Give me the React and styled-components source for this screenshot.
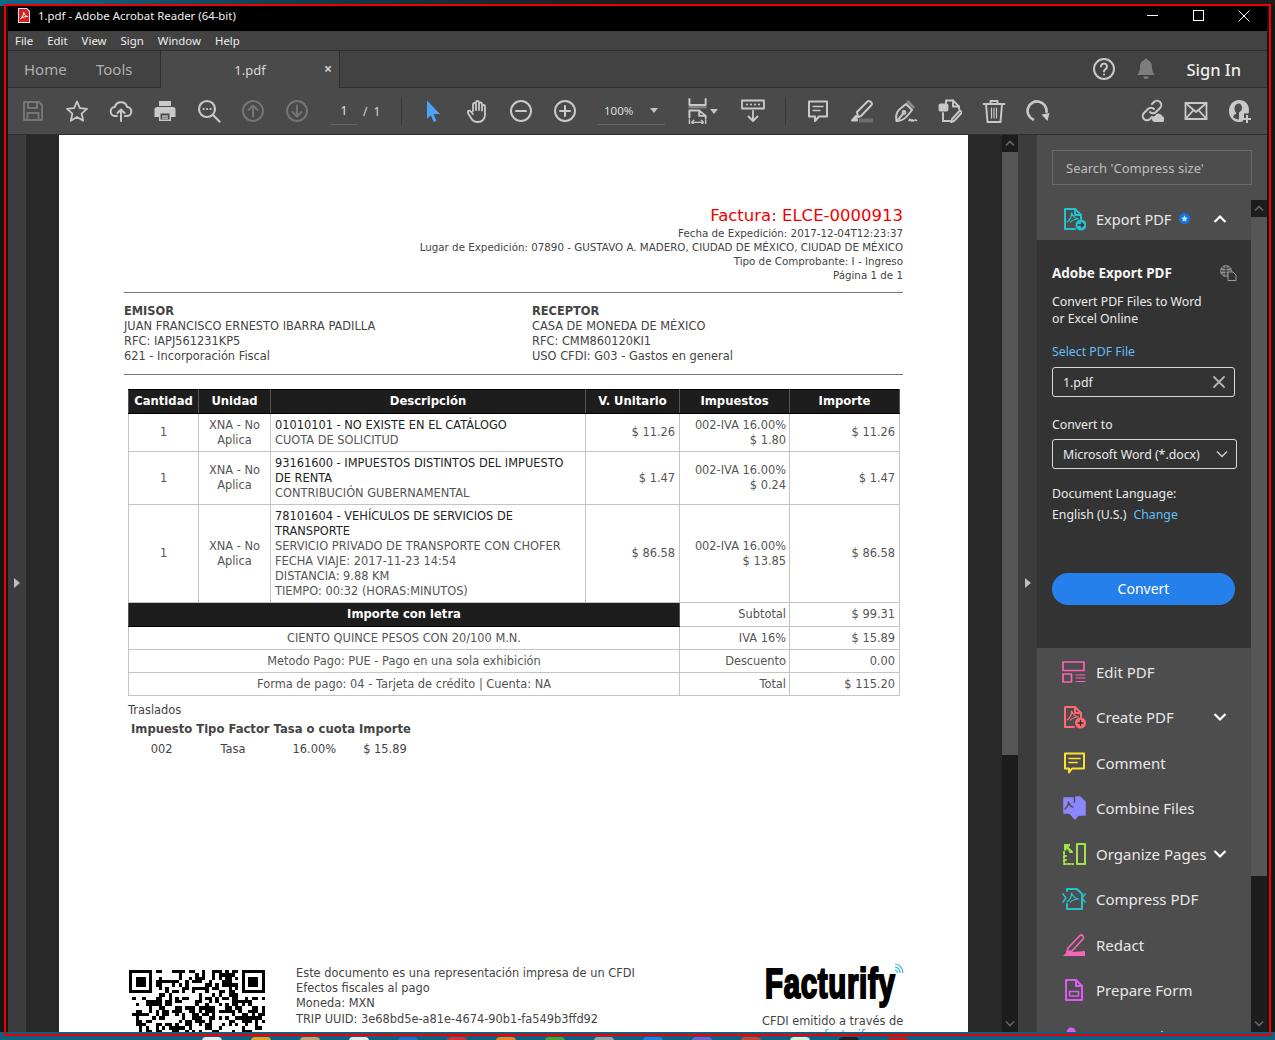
import React from 'react';
import styled, { createGlobalStyle } from 'styled-components';

const GlobalStyle = createGlobalStyle`
  html, body { margin: 0; padding: 0; background: #161616; }
  * { box-sizing: border-box; }
`;

const UI = `'Noto Sans', 'Open Sans', sans-serif`;
const DOC = `'DejaVu Sans', sans-serif`;

const Screen = styled.div`
  position: relative;
  width: 1275px;
  height: 1040px;
  overflow: hidden;
  padding: 6px 8px 0;
  display: flex;
  flex-direction: column;
  background: linear-gradient(90deg, #0f6a8c 0, #123c4c 300px, #1c1c1c 640px) top / 100% 6px no-repeat, #161616;
  font-family: ${UI};
`;
const RedFrame = styled.div`
  position: absolute;
  left: 4px;
  top: 4px;
  width: 1267px;
  height: 1032px;
  border: 2px solid #f00000;
  pointer-events: none;
`;
const Win = styled.div`
  width: 1259px;
  height: 1026px;
  flex: none;
  display: flex;
  flex-direction: column;
  background: #424242;
  overflow: hidden;
`;
const Taskbar = styled.div`
  flex: 1;
  margin: 0 -8px;
  padding: 5px 0 0 202px;
  display: flex;
  gap: 29px;
  background: #0f5f80;
  overflow: hidden;
`;
const TaskIcon = styled.span`
  flex: none;
  width: 20px;
  height: 8px;
  border-radius: 4px 4px 0 0;
  background: ${p => p.$c};
`;
const TitleBar = styled.div`
  height: 25px;
  flex: none;
  background: #000;
  color: #f0f0f0;
  display: flex;
  align-items: center;
  padding: 0 0 6px 9px;
  font-size: 11.4px;
`;
const TitleText = styled.span`
  margin-left: 7px;
`;
const WinButtons = styled.div`
  margin-left: auto;
  display: flex;
`;
const WinBtn = styled.span`
  width: 46px;
  height: 19px;
  display: flex;
  align-items: center;
  justify-content: center;
`;
const MenuBar = styled.div`
  height: 20px;
  flex: none;
  background: #424242;
  border-bottom: 1px solid #2e2e2e;
  display: flex;
  align-items: center;
  gap: 14px;
  padding: 0 0 0 7px;
  color: #ededed;
  font-size: 11.4px;
`;
const TabBar = styled.div`
  height: 37px;
  flex: none;
  display: flex;
  align-items: stretch;
  background: #424242;
  border-bottom: 1px solid #2e2e2e;
`;
const NavTab = styled.span`
  width: ${p => p.$w}px;
  padding-left: 16px;
  display: flex;
  align-items: center;
  color: #b0b0b0;
  font-size: 15px;
`;
const DocTab = styled.div`
  position: relative;
  width: 180px;
  margin-bottom: -1px;
  background: #4a4a4a;
  border-left: 1px solid #2e2e2e;
  border-right: 1px solid #2e2e2e;
  display: flex;
  align-items: center;
  justify-content: center;
  color: #d8d8d8;
  font-size: 13px;
`;
const TabClose = styled.span`
  position: absolute;
  right: 7px;
  top: 10px;
  color: #d0d0d0;
  font-size: 14px;
  font-weight: 700;
  line-height: 16px;
`;
const TabRight = styled.div`
  margin-left: auto;
  display: flex;
  align-items: center;
  padding-right: 26px;
`;
const SignIn = styled.span`
  margin-left: 10px;
  color: #ececec;
  font-size: 16.5px;
  font-weight: 500;
`;
const ToolBar = styled.div`
  height: 47px;
  flex: none;
  background: #4a4a4a;
  border-bottom: 1px solid #2e2e2e;
  display: flex;
  align-items: center;
  padding-left: 3px;
`;
const IconBtn = styled.span`
  width: ${p => p.$w || 44}px;
  margin-left: ${p => p.$ml || 0}px;
  flex: none;
  display: flex;
  align-items: center;
  justify-content: center;
`;
const PageField = styled.span`
  width: 28px;
  margin-left: 11px;
  height: 27px;
  border-bottom: 1px solid #656565;
  display: flex;
  align-items: center;
  justify-content: center;
  color: #e4e4e4;
  font-size: 12px;
`;
const PageTotal = styled.span`
  margin-left: 5px;
  width: 38px;
  color: #d8d8d8;
  font-size: 12px;
  word-spacing: 3px;
`;
const Sep = styled.span`
  width: 1px;
  height: 28px;
  flex: none;
  background: #383838;
  margin: 0 ${p => p.$r}px 0 ${p => p.$l}px;
`;
const ZoomField = styled.span`
  width: 67px;
  margin-left: 11px;
  height: 27px;
  border-bottom: 1px solid #656565;
  display: flex;
  align-items: center;
  justify-content: space-between;
  padding: 0 7px 0 6px;
  color: #dcdcdc;
  font-size: 11.5px;
`;
const Caret = styled.span`
  flex: none;
  width: 0;
  height: 0;
  border-left: 4px solid transparent;
  border-right: 4px solid transparent;
  border-top: 5px solid #c4c4c4;
`;
const ToolSpacer = styled.span`
  flex: 1;
`;
const Body = styled.div`
  flex: 1;
  min-height: 0;
  display: flex;
`;
const Rail = styled.div`
  width: ${p => p.$w}px;
  flex: none;
  display: flex;
  align-items: center;
  justify-content: center;
  background: #3c3c3c;
  padding-bottom: 1px;
`;
const RailArrow = styled.span`
  width: 0;
  height: 0;
  border-top: 5px solid transparent;
  border-bottom: 5px solid transparent;
  border-left: 6px solid #bdbdbd;
`;
const Gutter = styled.div`
  width: ${p => p.$w}px;
  flex: none;
  background: #282828;
`;
const Scroll = styled.div`
  width: 16px;
  flex: none;
  display: flex;
  flex-direction: column;
  background: #1c1c1c;
`;
const ScrollEnd = styled.div`
  height: 17px;
  flex: none;
  display: flex;
  align-items: center;
  justify-content: center;
  background: #1c1c1c;
`;
const ScrollThumb = styled.div`
  height: ${p => p.$h}px;
  flex: none;
  background: #565656;
`;
const ScrollRest = styled.div`
  flex: 1;
`;

const Page = styled.div`
  width: 909px;
  flex: none;
  background: #fff;
  overflow: hidden;
  padding: 71px 65px 0;
  font-family: ${DOC};
  font-size: 11.4px;
  line-height: 14px;
  color: #444;
`;
const Heading = styled.div`
  text-align: right;
  font-size: 10.3px;
`;
const InvoiceNo = styled.div`
  color: #f00000;
  font-size: 16.5px;
  line-height: 20px;
`;
const Rule = styled.div`
  height: 1px;
  background: #777;
  margin-top: ${p => p.$t}px;
`;
const Parties = styled.div`
  display: flex;
  padding-top: 11px;
  line-height: 15px;
`;
const Party = styled.div`
  width: 408px;
  flex: none;
`;
const PartyName = styled.div`
  font-weight: 700;
  color: #444;
`;
const InvoiceTable = styled.table`
  width: 771px;
  margin: 14px 0 0 4px;
  border-collapse: collapse;
  table-layout: fixed;
  color: #555;
  line-height: 15px;
`;
const Col = styled.col`
  width: ${p => p.$w}px;
`;
const Th = styled.th`
  height: 24px;
  padding: 0;
  background: #1d1d1d;
  color: #fff;
  border: 1px solid #000;
  border-left-color: #555;
  border-right-color: #555;
  font-weight: 700;
  font-size: 11.6px;
`;
const Td = styled.td`
  padding: ${p => p.$pad || '0 4px'};
  height: ${p => p.$h}px;
  border: 1px solid #c4c4c4;
  text-align: ${p => p.$align || 'left'};
  vertical-align: middle;
`;
const Code = styled.div`
  color: #222;
`;
const Trasl = styled.div`
  margin: 7px 0 0 4px;
`;
const TaxTable = styled.table`
  margin: 2px 0 0 5px;
  border-collapse: separate;
  border-spacing: 0;
`;
const TaxHead = styled.th`
  padding: 0 2px;
  height: 20px;
  font-weight: 700;
  font-size: 11.6px;
  white-space: nowrap;
`;
const TaxCell = styled.td`
  padding: 0;
  height: 20px;
  text-align: center;
`;
const Foot = styled.div`
  display: flex;
  margin: 211px 0 0 5px;
`;
const QrBox = styled.div`
  width: 136px;
  height: 136px;
  flex: none;
`;
const FootText = styled.div`
  margin: -4px 0 0 31px;
  line-height: 15.2px;
`;
const Brand = styled.div`
  margin-left: auto;
  width: 142px;
  margin-right: -1px;
  margin-top: -7px;
`;
const BrandBox = styled.div`
  position: relative;
`;
const BrandName = styled.div`
  height: 42px;
  color: #000;
  font-family: 'Liberation Sans', sans-serif;
  font-weight: 700;
  font-size: 42px;
  line-height: 42px;
  letter-spacing: 1px;
  -webkit-text-stroke: 2.2px #000;
  transform: scaleX(0.7);
  transform-origin: left center;
  margin-left: 3px;
  white-space: nowrap;
`;
const BrandWifi = styled.svg`
  position: absolute;
  right: 0;
  top: 0;
`;
const BrandNote = styled.div`
  margin-top: 9px;
  white-space: nowrap;
`;
const BrandLink = styled.div`
  padding-left: 62px;
  color: #3aa0d8;
`;

const Side = styled.div`
  width: 230px;
  flex: none;
  display: flex;
  flex-direction: column;
  background: #4d4d4d;
`;
const SearchWrap = styled.div`
  height: 65px;
  flex: none;
  padding: 15px 15px 0;
`;
const SearchBox = styled.div`
  height: 35px;
  border: 1px solid #6a6a6a;
  padding-left: 13px;
  display: flex;
  align-items: center;
  color: #bdbdbd;
  font-size: 13px;
`;
const SideMain = styled.div`
  flex: 1;
  min-height: 0;
  display: flex;
`;
const Panel = styled.div`
  width: 214px;
  flex: none;
  overflow: hidden;
`;
const ToolList = styled.div`
  padding-top: 1px;
`;
const ToolRow = styled.div`
  height: ${p => p.$h || 45.5}px;
  display: flex;
  align-items: center;
  padding: ${p => p.$h ? '0 24px 3px 25px' : '0 24px 0 25px'};
  color: #e8e8e8;
  font-size: ${p => p.$h ? 14.5 : 15}px;
`;
const ToolName = styled.span`
  margin-left: 10px;
  white-space: nowrap;
`;
const Star = styled.span`
  margin-left: 8px;
  display: flex;
`;
const Chevron = styled.span`
  margin-left: auto;
  display: flex;
`;
const Section = styled.div`
  height: 408px;
  background: #333;
  padding: 25px 15px 0;
  color: #ececec;
  font-size: 12.3px;
  line-height: 17px;
`;
const SectionHead = styled.div`
  display: flex;
  justify-content: space-between;
  font-weight: 700;
  font-size: 13.5px;
  color: #f4f4f4;
  margin-right: -1px;
`;
const Intro = styled.div`
  margin-top: 11px;
`;
const Blue = styled.div`
  margin-top: 16px;
  color: #63bdf6;
`;
const Field = styled.div`
  width: ${p => p.$w}px;
  height: 30px;
  margin-top: ${p => p.$t}px;
  border: 1px solid #d8d8d8;
  border-radius: 3px;
  display: flex;
  align-items: center;
  justify-content: space-between;
  padding: 0 8px 0 10px;
`;
const Label = styled.div`
  margin-top: ${p => p.$t}px;
`;
const Change = styled.span`
  margin-left: 7px;
  color: #63bdf6;
`;
const ConvertBtn = styled.div`
  width: 183px;
  height: 32px;
  margin-top: 50px;
  padding-bottom: 2px;
  border-radius: 16px;
  background: #2680eb;
  color: #fff;
  font-size: 14px;
  display: flex;
  align-items: center;
  justify-content: center;
`;

const Svg = ({ c = '#c9c9c9', s = 24, w = 2, vb = 24, children }) => (
  <svg width={s} height={s} viewBox={`0 0 ${vb} ${vb}`} fill="none" stroke={c} strokeWidth={w} strokeLinejoin="round" strokeLinecap="round">
    {children}
  </svg>
);

const PdfMark = ({ c }) => <path d="M5 15c3-2 5-6 4.500-9 2 4 4 6 7 6-3 0-6 1-8 3" stroke={c} strokeWidth="1.200" fill="none" />;

const icons = {
  save: c => <Svg c={c}><path d="M3 3h15l3 3v15H3z" /><path d="M7 3v6h9V3M6.500 21v-7h11v7" /></Svg>,
  star: c => <Svg c={c} w={1.8}><path d="M12 2.500l2.900 6.700 7.100.7-5.400 4.700 1.600 7.100-6.200-3.700-6.200 3.700 1.600-7.100L2 9.900l7.100-.7z" /></Svg>,
  upload: c => <Svg c={c}><path d="M8 17H6.500a4.500 4.500 0 0 1-.6-9 6.300 6.300 0 0 1 12.200 0 4.500 4.500 0 0 1-.6 9H16" /><path d="M12 22v-11M8.500 14l3.500-3.500 3.500 3.500" /></Svg>,
  print: c => <Svg c={c} w={0}><path fill={c} d="M6 2h12v5H6zM4 8h16a2.500 2.500 0 0 1 2.500 2.500V18H18v4H6v-4H1.500v-7.500A2.500 2.500 0 0 1 4 8z" /><path fill="#4a4a4a" d="M7.500 14.500h9v6h-9z" /><path fill={c} d="M9 16.500h6v1.200H9zM9 18.500h6v1.200H9z" /></Svg>,
  find: c => <Svg c={c} w={2.2}><circle cx="10" cy="10" r="8" /><path d="M16 16l6.500 6.500" /><path d="M6.500 10h.1M10 10h.1M13.500 10h.1" /></Svg>,
  up: c => <Svg c={c}><circle cx="12" cy="12" r="10" /><path d="M12 17.500V7M7.500 11L12 6.500l4.500 4.500" /></Svg>,
  down: c => <Svg c={c}><circle cx="12" cy="12" r="10" /><path d="M12 6.500V17M7.500 13l4.500 4.500 4.500-4.500" /></Svg>,
  arrow: c => <Svg c={c} w={0}><path fill={c} d="M6 1.500l13 13.500-6.500.2 3 6.800-2.800 1-2.900-6.800L6 20z" /></Svg>,
  hand: c => <Svg c={c} w={1.8}><path d="M8 12V5.500a1.500 1.500 0 0 1 3 0V11m0-7.500a1.500 1.500 0 0 1 3 0V11m0-6a1.500 1.500 0 0 1 3 0v6.500m0-4a1.500 1.500 0 0 1 3 0V16c0 4-3 7-7 7h-1c-3 0-4.500-1.500-6-4l-3-5c-1-2 1.500-3 2.800-1.500L8 15" /></Svg>,
  minus: c => <Svg c={c}><circle cx="12" cy="12" r="10" /><path d="M7 12h10" /></Svg>,
  plus: c => <Svg c={c}><circle cx="12" cy="12" r="10" /><path d="M7 12h10M12 7v10" /></Svg>,
  fit: c => <Svg c={c} s={26} w={1.8}><path d="M5 1v5.500h15V1" /><path d="M5 8.500h15" stroke="#8a8a8a" strokeWidth="2" /><path d="M5 18v-6.500h9l6 5v2M14 11.500v5h6" /><path d="M5 20v5M20 20v5M7 22.500h11M9 20.500l-2 2 2 2M16 20.500l2 2-2 2" strokeWidth="1.300" /></Svg>,
  scroll: c => <Svg c={c} s={24} w={1.8}><rect x="1" y="1.500" width="22" height="8" /><path d="M6 5.500h.1M10 5.500h.1M14 5.500h.1M18 5.500h.1" strokeWidth="2" /><path d="M12 12v10M7.500 17.500L12 22l4.500-4.500" /></Svg>,
  comment: c => <Svg c={c}><path d="M3 2.500h18v15h-8l-4 4.500v-4.500H3z" /><path d="M7 7.500h10M7 11.500h7" strokeWidth="1.300" /></Svg>,
  highlight: c => <Svg c={c} w={2}><path d="M7 13L17.500 2.500c1.500-1.500 5.500 1 4 3.500L11 17l-3 1z" /><path d="M6 17l-4 4.500h5z" fill={c} /><path d="M9 21.500h14" stroke="#6e6e6e" strokeWidth="4" strokeLinecap="butt" /></Svg>,
  sign: c => <Svg c={c} w={2}><path d="M2.500 22c-1-6 .5-10 4-12.500L12 5l6 6-4 5c-3 4-6 6-11.500 6z" /><path d="M13 2l7 7" stroke="#8a8a8a" strokeWidth="3" strokeLinecap="butt" /><path d="M3 22l5.500-6.500" /><circle cx="10" cy="13.500" r="1.400" /><path d="M15 21.500c1-1.500 1.500-1.500 2 0s1-1.500 1.500-.5.500 1.500 1.500.5 1-1 2.500 0" strokeWidth="1.600" /></Svg>,
  fill: c => <Svg c={c} w={1.9}><path d="M8 5V1.500h7l6 6V10" /><path d="M15 1.500v6h6" /><path d="M5 14v8h7" /><rect x="1.500" y="5.500" width="8" height="6" rx="1" fill={c} /><path d="M14 20l8-8.500 2 2-8 8.500-3 1z" /></Svg>,
  trash: c => <Svg c={c} w={1.9}><path d="M1.500 5h21M8.500 5V2h7v3M4 5l1.500 18h13L20 5" /><path d="M9.500 9v10M12 9v10M14.500 9v10" strokeWidth="1.200" /></Svg>,
  redo: c => <Svg c={c} w={2.6}><path d="M7 20.500A9.500 9.500 0 1 1 20.500 13" /><path fill={c} strokeWidth="0" d="M15.500 15.500L23.500 14l-2 8z" /></Svg>,
  link: c => <Svg c={c} w={2}><path d="M10 13a4 4 0 0 0 6 0l4-4a4 4 0 0 0-6-6l-2 2" /><path d="M14 10a4 4 0 0 0-6 0l-4 4a4 4 0 0 0 6 6l2-2" /><path fill={c} strokeWidth="0" d="M15 23a3 3 0 0 1 0-6 4 4 0 0 1 7.500.500 2.800 2.800 0 0 1 0 5.500z" /></Svg>,
  mail: c => <Svg c={c} w={1.8}><rect x="1.500" y="4" width="21" height="16" /><path d="M1.500 4L12 13 22.500 4M1.500 20l8-8.800M22.500 20l-8-8.800" /></Svg>,
  user: c => <Svg c={c} w={0}><path fill={c} fillRule="evenodd" d="M11 1c6 0 10 4 10 10 0 1.500-.2 2.500-.5 3.500H16V19h-1v3.500c-1 .3-2.500.5-4 .5C5 23 1 18 1 12S5 1 11 1zm0 3.500c-3 0-4.500 2.500-4.500 5 0 2 1 4 2 5-2 1-3 2-3.500 3.500 1.500 1.500 3.500 2.500 6 2.500v-7c2-1 3-3 3-4.500 0-2.500-1.500-4.500-3-4.500z" /><path fill={c} d="M18 16h2v3h3v2h-3v3h-2v-3h-3v-2h3z" /></Svg>,
  help: c => <Svg c={c} w={2}><circle cx="12" cy="12" r="10" /><path d="M9 9.500a3 3 0 1 1 4.500 2.600c-1 .6-1.500 1-1.500 2.400M12 17.500h.1" /></Svg>,
  bell: c => <Svg c={c} w={0}><path fill={c} d="M12 1.500c1 0 1.500.7 1.500 1.500 3 .8 4.500 3.500 4.500 6.500 0 4 1 6.500 3 8.500H3c2-2 3-4.500 3-8.500 0-3 1.500-5.700 4.500-6.500 0-.8.500-1.500 1.500-1.500zM9.500 19.500h5a2.500 2.500 0 0 1-5 0z" /></Svg>,
  xClose: c => <Svg c={c} s={14} vb={14} w={1.8}><path d="M2 2l10 10M12 2L2 12" /></Svg>,
};

const toolIcons = {
  export: <Svg c="#26c0cf"><path d="M13 22H3V2h10l6 6v4" /><path d="M13 2v6h6" /><PdfMark c="#26c0cf" /><circle cx="19" cy="18" r="5.500" fill="#26c0cf" strokeWidth="0" /><path d="M16 18h5.500M19.500 16l2 2-2 2" stroke="#333" strokeWidth="1.400" /></Svg>,
  edit: <Svg c="#ff62b4" w={1.7}><rect x="1" y="2" width="21" height="8.500" /><rect x="1" y="14" width="8.500" height="8" /><path d="M14 15h9M14 18h9M14 21.500h9" strokeWidth="1.200" /></Svg>,
  create: <Svg c="#ff6b70"><path d="M12 22H3V2h10l6 6v4" /><path d="M13 2v6h6" /><PdfMark c="#ff6b70" /><circle cx="18.500" cy="18" r="5.500" fill="#ff6b70" strokeWidth="0" /><path d="M16 18h5M18.500 15.500v5" stroke="#333" strokeWidth="1.400" /></Svg>,
  comment: <Svg c="#ffe12e"><path d="M3 2.500h19v15H10l-3 4v-4H3z" /><path d="M7 7.500h11M7 11.500h8" strokeWidth="1.700" /></Svg>,
  combine: <Svg c="#8c86ff" w={1.5}><path fill="#8c86ff" d="M2 2h9v15H2z" /><path d="M3 13c2-2 4-4 3.500-7 1 3 2 5 4.500 5" stroke="#4d4d4d" /><path fill="#8c86ff" d="M14 1h4l5 5v13h-9z" /><path d="M8 17h10l-5 6z" fill="#8c86ff" /><path d="M13 8v10" stroke="#8c86ff" strokeWidth="3" /></Svg>,
  organize: <Svg c="#a1e34b"><rect x="15" y="2" width="8" height="20" /><path d="M2 10v12h9M2 14h3M2 18h3M8 10h3" strokeDasharray="2 2" /><path fill="#a1e34b" strokeWidth="0" d="M2 2h6v2.500H6l5 5H7.500l-3-3v2H2z" /></Svg>,
  compress: <Svg c="#26c0cf"><path d="M5 4V2h10l5 5v15H5V17" /><path d="M1 7l3 4-3 4M23 7l-3 4 3 4" strokeWidth="1.600" /><PdfMark c="#26c0cf" /></Svg>,
  redact: <Svg c="#f567b4" w={1.8}><path d="M6 15L18 2.500c2-1.500 4.500 1 3 3.500L10 18l-5 1z" /><path fill="#f567b4" strokeWidth="0" d="M1 23l4-4h6l12-1v5z" /></Svg>,
  form: <Svg c="#dc5cf0"><path d="M4 2h10l6 6v14H4z" /><path d="M14 2v6h6" /><rect x="7.500" y="13.500" width="9" height="4.500" strokeWidth="1.600" /></Svg>,
  request: <Svg c="#dc5cf0" w={0}><path fill="#dc5cf0" d="M12 1a6 6 0 0 1 6 6v10H6V7a6 6 0 0 1 6-6z" /></Svg>,
};

const tools = [
  { key: 'edit', name: 'Edit PDF' },
  { key: 'create', name: 'Create PDF', more: true },
  { key: 'comment', name: 'Comment' },
  { key: 'combine', name: 'Combine Files' },
  { key: 'organize', name: 'Organize Pages', more: true },
  { key: 'compress', name: 'Compress PDF' },
  { key: 'redact', name: 'Redact' },
  { key: 'form', name: 'Prepare Form' },
  { key: 'request', name: 'Request Signatures' },
];

const ChevronIcon = ({ up }) => (
  <svg width="14" height="10" viewBox="0 0 14 10" fill="none" stroke="#fff" strokeWidth="2.200">
    <path d={up ? 'M1.500 8L7 2.500 12.500 8' : 'M1.500 2L7 7.500 12.500 2'} />
  </svg>
);

const ScrollGlyph = ({ up }) => (
  <svg width="10" height="7" viewBox="0 0 10 7" fill="none" stroke="#666" strokeWidth="1.600">
    <path d={up ? 'M1 5.500l4-4 4 4' : 'M1 1.500l4 4 4-4'} />
  </svg>
);

// pseudo random modules, the real code can't be read from the picture anyway
function qrPath() {
  const n = 41;
  let seed = 9137;
  const next = () => {
    seed = (seed * 1103515245 + 12345) & 0x7fffffff;
    return (seed >> 16) & 1;
  };
  const inFinder = (x, y) => (x < 8 && y < 8) || (x >= n - 8 && y < 8) || (x < 8 && y >= n - 8);
  let d = '';
  for (let y = 0; y < n; y++) {
    for (let x = 0; x < n; x++) {
      const bit = next();
      if (!inFinder(x, y) && bit) d += `M${x} ${y}h1v1h-1z`;
    }
  }
  [[0, 0], [n - 7, 0], [0, n - 7]].forEach(([x, y]) => {
    d += `M${x} ${y}h7v7h-7zM${x + 1} ${y + 1}v5h5v-5zM${x + 2} ${y + 2}h3v3h-3z`;
  });
  return d;
}

const rows = [
  { h: 38, code: '01010101 - NO EXISTE EN EL CATÁLOGO', lines: ['CUOTA DE SOLICITUD'], unit: '$ 11.26', tax: '$ 1.80' },
  { h: 53, code: '93161600 - IMPUESTOS DISTINTOS DEL IMPUESTO DE RENTA', lines: ['CONTRIBUCIÓN GUBERNAMENTAL'], unit: '$ 1.47', tax: '$ 0.24' },
  { h: 98, code: '78101604 - VEHÍCULOS DE SERVICIOS DE TRANSPORTE', lines: ['SERVICIO PRIVADO DE TRANSPORTE CON CHOFER', 'FECHA VIAJE: 2017-11-23 14:54', 'DISTANCIA: 9.88 KM', 'TIEMPO: 00:32 (HORAS:MINUTOS)'], unit: '$ 86.58', tax: '$ 13.85' },
];

const totals = [
  ['Subtotal', '$ 99.31'],
  ['IVA 16%', '$ 15.89'],
  ['Descuento', '0.00'],
  ['Total', '$ 115.20'],
];
const letra = ['CIENTO QUINCE PESOS CON 20/100 M.N.', 'Metodo Pago: PUE - Pago en una sola exhibición', 'Forma de pago: 04 - Tarjeta de crédito | Cuenta: NA'];
const taskColors = ['#e8e8e8', '#e8a020', '#c8a070', '#e8e8e8', '#1e70c8', '#d83030', '#f08020', '#50a030', '#a0a0a0', '#2080e0', '#7060d0', '#d04030', '#d8f0d8', '#202020', '#c01818'];

export default function App() {
  return (
    <Screen>
      <GlobalStyle />
      <Win>
        <TitleBar>
          <svg width="14" height="15" viewBox="0 0 14 15">
            <path d="M1 0h9l3 3v12H1z" fill="#e8e8e8" />
            <path d="M2 1h7.500L12 3.500V14H2z" fill="#d8201c" />
            <path d="M3.500 10.500c2-1.500 3.500-4 3-6.500 1 3 2.500 4.500 4.500 4.500-2.500 0-5 .5-7.500 2z" fill="none" stroke="#fff" strokeWidth="1" />
          </svg>
          <TitleText>1.pdf - Adobe Acrobat Reader (64-bit)</TitleText>
          <WinButtons>
            <WinBtn><svg width="11" height="11"><path d="M0 5.500h11" stroke="#fff" /></svg></WinBtn>
            <WinBtn><svg width="11" height="11"><rect x=".5" y=".5" width="10" height="10" fill="none" stroke="#fff" /></svg></WinBtn>
            <WinBtn><svg width="12" height="12"><path d="M.5.500l11 11M11.500.500l-11 11" stroke="#fff" /></svg></WinBtn>
          </WinButtons>
        </TitleBar>
        <MenuBar>
          <span>File</span><span>Edit</span><span>View</span><span>Sign</span><span>Window</span><span>Help</span>
        </MenuBar>
        <TabBar>
          <NavTab $w={72}>Home</NavTab>
          <NavTab $w={80}>Tools</NavTab>
          <DocTab>1.pdf<TabClose>×</TabClose></DocTab>
          <TabRight>
            {icons.help('#c9c9c9')}
            <IconBtn $w={60}>{icons.bell('#7d7d7d')}</IconBtn>
            <SignIn>Sign In</SignIn>
          </TabRight>
        </TabBar>
        <ToolBar>
          <IconBtn>{icons.save('#757575')}</IconBtn>
          <IconBtn>{icons.star('#c9c9c9')}</IconBtn>
          <IconBtn>{icons.upload('#c9c9c9')}</IconBtn>
          <IconBtn>{icons.print('#c9c9c9')}</IconBtn>
          <IconBtn>{icons.find('#c9c9c9')}</IconBtn>
          <IconBtn>{icons.up('#757575')}</IconBtn>
          <IconBtn>{icons.down('#757575')}</IconBtn>
          <PageField>1</PageField>
          <PageTotal>/ 1</PageTotal>
          <Sep $l={0} $r={9} />
          <IconBtn>{icons.arrow('#4aa3f5')}</IconBtn>
          <IconBtn>{icons.hand('#c9c9c9')}</IconBtn>
          <IconBtn>{icons.minus('#c9c9c9')}</IconBtn>
          <IconBtn>{icons.plus('#c9c9c9')}</IconBtn>
          <ZoomField>100%<Caret /></ZoomField>
          <IconBtn $w={26} $ml={19}>{icons.fit('#c9c9c9')}</IconBtn>
          <Caret />
          <IconBtn $w={34} $ml={18}>{icons.scroll('#c9c9c9')}</IconBtn>
          <Sep $l={15} $r={10} />
          <IconBtn>{icons.comment('#c9c9c9')}</IconBtn>
          <IconBtn>{icons.highlight('#c9c9c9')}</IconBtn>
          <IconBtn>{icons.sign('#c9c9c9')}</IconBtn>
          <IconBtn>{icons.fill('#c9c9c9')}</IconBtn>
          <IconBtn>{icons.trash('#c9c9c9')}</IconBtn>
          <IconBtn>{icons.redo('#c9c9c9')}</IconBtn>
          <ToolSpacer />
          <IconBtn>{icons.link('#c9c9c9')}</IconBtn>
          <IconBtn>{icons.mail('#c9c9c9')}</IconBtn>
          <IconBtn>{icons.user('#c9c9c9')}</IconBtn>
          <IconBtn $w={5} />
        </ToolBar>
        <Body>
          <Rail $w={18}><RailArrow /></Rail>
          <Gutter $w={33} />
          <Page>
            <Heading>
              <InvoiceNo>Factura: ELCE-0000913</InvoiceNo>
              <div>Fecha de Expedición: 2017-12-04T12:23:37</div>
              <div>Lugar de Expedición: 07890 - GUSTAVO A. MADERO, CIUDAD DE MÉXICO, CIUDAD DE MÉXICO</div>
              <div>Tipo de Comprobante: I - Ingreso</div>
              <div>Página 1 de 1</div>
            </Heading>
            <Rule $t={10} />
            <Parties>
              <Party>
                <PartyName>EMISOR</PartyName>
                <div>JUAN FRANCISCO ERNESTO IBARRA PADILLA</div>
                <div>RFC: IAPJ561231KP5</div>
                <div>621 - Incorporación Fiscal</div>
              </Party>
              <Party>
                <PartyName>RECEPTOR</PartyName>
                <div>CASA DE MONEDA DE MÉXICO</div>
                <div>RFC: CMM860120KI1</div>
                <div>USO CFDI: G03 - Gastos en general</div>
              </Party>
            </Parties>
            <Rule $t={10} />
            <InvoiceTable>
              <colgroup>
                <Col $w={70} /><Col $w={72} /><Col $w={315} /><Col $w={94} /><Col $w={110} /><Col $w={110} />
              </colgroup>
              <thead>
                <tr>
                  <Th>Cantidad</Th><Th>Unidad</Th><Th>Descripción</Th><Th>V. Unitario</Th><Th>Impuestos</Th><Th>Importe</Th>
                </tr>
              </thead>
              <tbody>
                {rows.map(r => (
                  <tr key={r.code}>
                    <Td $h={r.h} $align="center">1</Td>
                    <Td $align="center" $pad="0 2px">XNA - No<br />Aplica</Td>
                    <Td>
                      <Code>{r.code}</Code>
                      {r.lines.map(l => <div key={l}>{l}</div>)}
                    </Td>
                    <Td $align="right">{r.unit}</Td>
                    <Td $align="right" $pad="0 3px">002-IVA 16.00%<br />{r.tax}</Td>
                    <Td $align="right">{r.unit}</Td>
                  </tr>
                ))}
                <tr>
                  <Th colSpan={4}>Importe con letra</Th>
                  <Td $align="right" $pad="0 3px">{totals[0][0]}</Td>
                  <Td $align="right">{totals[0][1]}</Td>
                </tr>
                {letra.map((t, i) => (
                  <tr key={t}>
                    <Td $h={23} colSpan={4} $align="center">{t}</Td>
                    <Td $align="right" $pad="0 3px">{totals[i + 1][0]}</Td>
                    <Td $align="right">{totals[i + 1][1]}</Td>
                  </tr>
                ))}
              </tbody>
            </InvoiceTable>
            <Trasl>Traslados</Trasl>
            <TaxTable>
              <thead>
                <tr><TaxHead>Impuesto</TaxHead><TaxHead>Tipo Factor</TaxHead><TaxHead>Tasa o cuota</TaxHead><TaxHead>Importe</TaxHead></tr>
              </thead>
              <tbody>
                <tr><TaxCell>002</TaxCell><TaxCell>Tasa</TaxCell><TaxCell>16.00%</TaxCell><TaxCell>$ 15.89</TaxCell></tr>
              </tbody>
            </TaxTable>
            <Foot>
              <QrBox>
                <svg width="136" height="136" viewBox="0 0 41 41" shapeRendering="crispEdges">
                  <path d={qrPath()} fill="#000" fillRule="evenodd" />
                </svg>
              </QrBox>
              <FootText>
                <div>Este documento es una representación impresa de un CFDI</div>
                <div>Efectos fiscales al pago</div>
                <div>Moneda: MXN</div>
                <div>TRIP UUID: 3e68bd5e-a81e-4674-90b1-fa549b3ffd92</div>
              </FootText>
              <Brand>
                <BrandBox>
                  <BrandName>Facturify</BrandName>
                  <BrandWifi width="10" height="12" viewBox="0 0 10 12" fill="none" stroke="#35b5d8" strokeWidth="1.200">
                    <path d="M1 1c4 0 8 4 8 9M1 4c3 0 5 3 5 6M1 7c1.500 0 2.500 1.500 2.500 3" />
                  </BrandWifi>
                </BrandBox>
                <BrandNote>CFDI emitido a través de</BrandNote>
                <BrandLink>facturify</BrandLink>
              </Brand>
            </Foot>
          </Page>
          <Gutter $w={34} />
          <Scroll>
            <ScrollEnd><ScrollGlyph up /></ScrollEnd>
            <ScrollThumb $h={603} />
            <ScrollRest />
            <ScrollEnd><ScrollGlyph /></ScrollEnd>
          </Scroll>
          <Rail $w={19}><RailArrow /></Rail>
          <Side>
            <SearchWrap><SearchBox>Search 'Compress size'</SearchBox></SearchWrap>
            <SideMain>
              <Panel>
                <ToolRow $h={40}>
                  {toolIcons.export}
                  <ToolName>Export PDF</ToolName>
                  <Star>
                    <svg width="11" height="11" viewBox="0 0 11 11">
                      <circle cx="5.500" cy="5.500" r="5.500" fill="#1473e6" />
                      <path d="M5.500 2.300l1 2.100 2.200.3-1.600 1.500.4 2.200-2-1-2 1 .4-2.200L2.300 4.700l2.200-.3z" fill="#cfe3ff" />
                    </svg>
                  </Star>
                  <Chevron><ChevronIcon up /></Chevron>
                </ToolRow>
                <Section>
                  <SectionHead>
                    <span>Adobe Export PDF</span>
                    <svg width="17" height="16" viewBox="0 0 17 16" fill="none" stroke="#8c8c8c" strokeWidth="1">
                      <circle cx="6" cy="6" r="5.500" fill="#8c8c8c" />
                      <path d="M.5 6h11M6 .500v11M2 2.500c2 1 6 1 8 0M2 9.500c2-1 6-1 8 0" stroke="#333" />
                      <path d="M8 7h5l3 3v5.500H8z" fill="#333" stroke="#9a9a9a" />
                    </svg>
                  </SectionHead>
                  <Intro>Convert PDF Files to Word<br />or Excel Online</Intro>
                  <Blue>Select PDF File</Blue>
                  <Field $w={183} $t={7}>1.pdf{icons.xClose('#b4b4b4')}</Field>
                  <Label $t={19}>Convert to</Label>
                  <Field $w={185} $t={6}>
                    Microsoft Word (*.docx)
                    <svg width="12" height="8" viewBox="0 0 12 8" fill="none" stroke="#cfcfcf" strokeWidth="1.400"><path d="M1 1.500l5 5 5-5" /></svg>
                  </Field>
                  <Label $t={16}>Document Language:</Label>
                  <Label $t={4}>English (U.S.)<Change>Change</Change></Label>
                  <ConvertBtn>Convert</ConvertBtn>
                </Section>
                <ToolList>
                  {tools.map(t => (
                    <ToolRow key={t.key}>
                      {toolIcons[t.key]}
                      <ToolName>{t.name}</ToolName>
                      {t.more && <Chevron><ChevronIcon /></Chevron>}
                    </ToolRow>
                  ))}
                </ToolList>
              </Panel>
              <Scroll>
                <ScrollEnd><ScrollGlyph up /></ScrollEnd>
                <ScrollThumb $h={659} />
                <ScrollRest />
                <ScrollEnd><ScrollGlyph /></ScrollEnd>
              </Scroll>
            </SideMain>
          </Side>
        </Body>
      </Win>
      <Taskbar>
        {taskColors.map((c, i) => <TaskIcon key={i} $c={c} />)}
      </Taskbar>
      <RedFrame />
    </Screen>
  );
}
